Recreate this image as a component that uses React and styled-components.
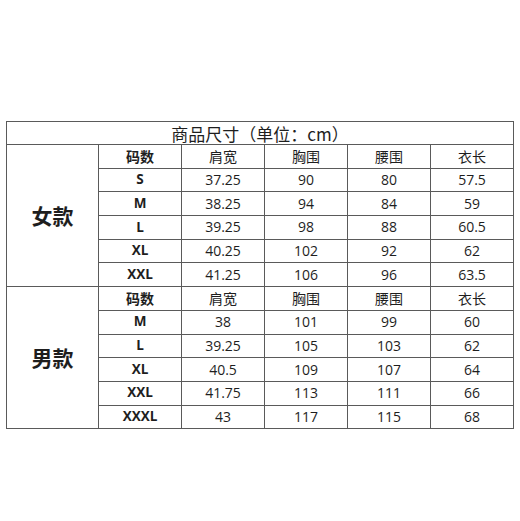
import React from "react";
import styled, { createGlobalStyle } from "styled-components";

const Global = createGlobalStyle`
  html, body { margin: 0; padding: 0; background: #fff; }
  body { font-family: "Open Sans", "Noto Sans CJK SC", sans-serif; color: #1e1e1e; }
`;

const Page = styled.div`
  width: 520px;
  height: 521px;
  padding: 121px 0 0 6px;
  box-sizing: border-box;
`;

const Table = styled.table`
  border-collapse: collapse;
  table-layout: fixed;
  width: 507px;
`;

const Col = styled.col`
  width: ${(p) => p.$w}px;
`;

const Cell = styled.td`
  border: 1px solid #5a5a5a;
  padding: 0;
  height: ${(p) => p.$h || 22.7}px;
  text-align: center;
  vertical-align: middle;
  font-size: 14px;
  line-height: 1;
  font-weight: 400;
`;

const TitleCell = styled(Cell)`
  font-family: "Noto Sans CJK SC", sans-serif;
  font-size: 17px;
  height: 22px;
`;

const GroupCell = styled(Cell)`
  font-family: "Noto Sans CJK SC", sans-serif;
  font-size: 21px;
  font-weight: 700;
`;

const HeadCell = styled(Cell)`
  font-family: "Noto Sans CJK SC", sans-serif;
  font-size: 14px;
  font-weight: ${(p) => (p.$bold ? 700 : 400)};
`;

const SizeCell = styled(Cell)`
  font-size: 13.5px;
  font-weight: 700;
`;

const headers = ["肩宽", "胸围", "腰围", "衣长"];

const groups = [
  {
    name: "女款",
    rows: [
      ["S", "37.25", "90", "80", "57.5"],
      ["M", "38.25", "94", "84", "59"],
      ["L", "39.25", "98", "88", "60.5"],
      ["XL", "40.25", "102", "92", "62"],
      ["XXL", "41.25", "106", "96", "63.5"],
    ],
  },
  {
    name: "男款",
    rows: [
      ["M", "38", "101", "99", "60"],
      ["L", "39.25", "105", "103", "62"],
      ["XL", "40.5", "109", "107", "64"],
      ["XXL", "41.75", "113", "111", "66"],
      ["XXXL", "43", "117", "115", "68"],
    ],
  },
];

export default function App() {
  return (
    <>
      <Global />
      <Page>
        <Table>
          <colgroup>
            <Col $w={92} />
            <Col $w={83} />
            <Col $w={83} />
            <Col $w={83} />
            <Col $w={83} />
            <Col $w={83} />
          </colgroup>
          <tbody>
            <tr>
              <TitleCell colSpan={6}>商品尺寸（单位：cm）</TitleCell>
            </tr>
            {groups.map((g) => (
              <React.Fragment key={g.name}>
                <tr>
                  <GroupCell rowSpan={6}>{g.name}</GroupCell>
                  <HeadCell $bold>码数</HeadCell>
                  {headers.map((h) => (
                    <HeadCell key={h}>{h}</HeadCell>
                  ))}
                </tr>
                {g.rows.map((r) => (
                  <tr key={r[0]}>
                    <SizeCell>{r[0]}</SizeCell>
                    {r.slice(1).map((v, i) => (
                      <Cell key={i}>{v}</Cell>
                    ))}
                  </tr>
                ))}
              </React.Fragment>
            ))}
          </tbody>
        </Table>
      </Page>
    </>
  );
}
